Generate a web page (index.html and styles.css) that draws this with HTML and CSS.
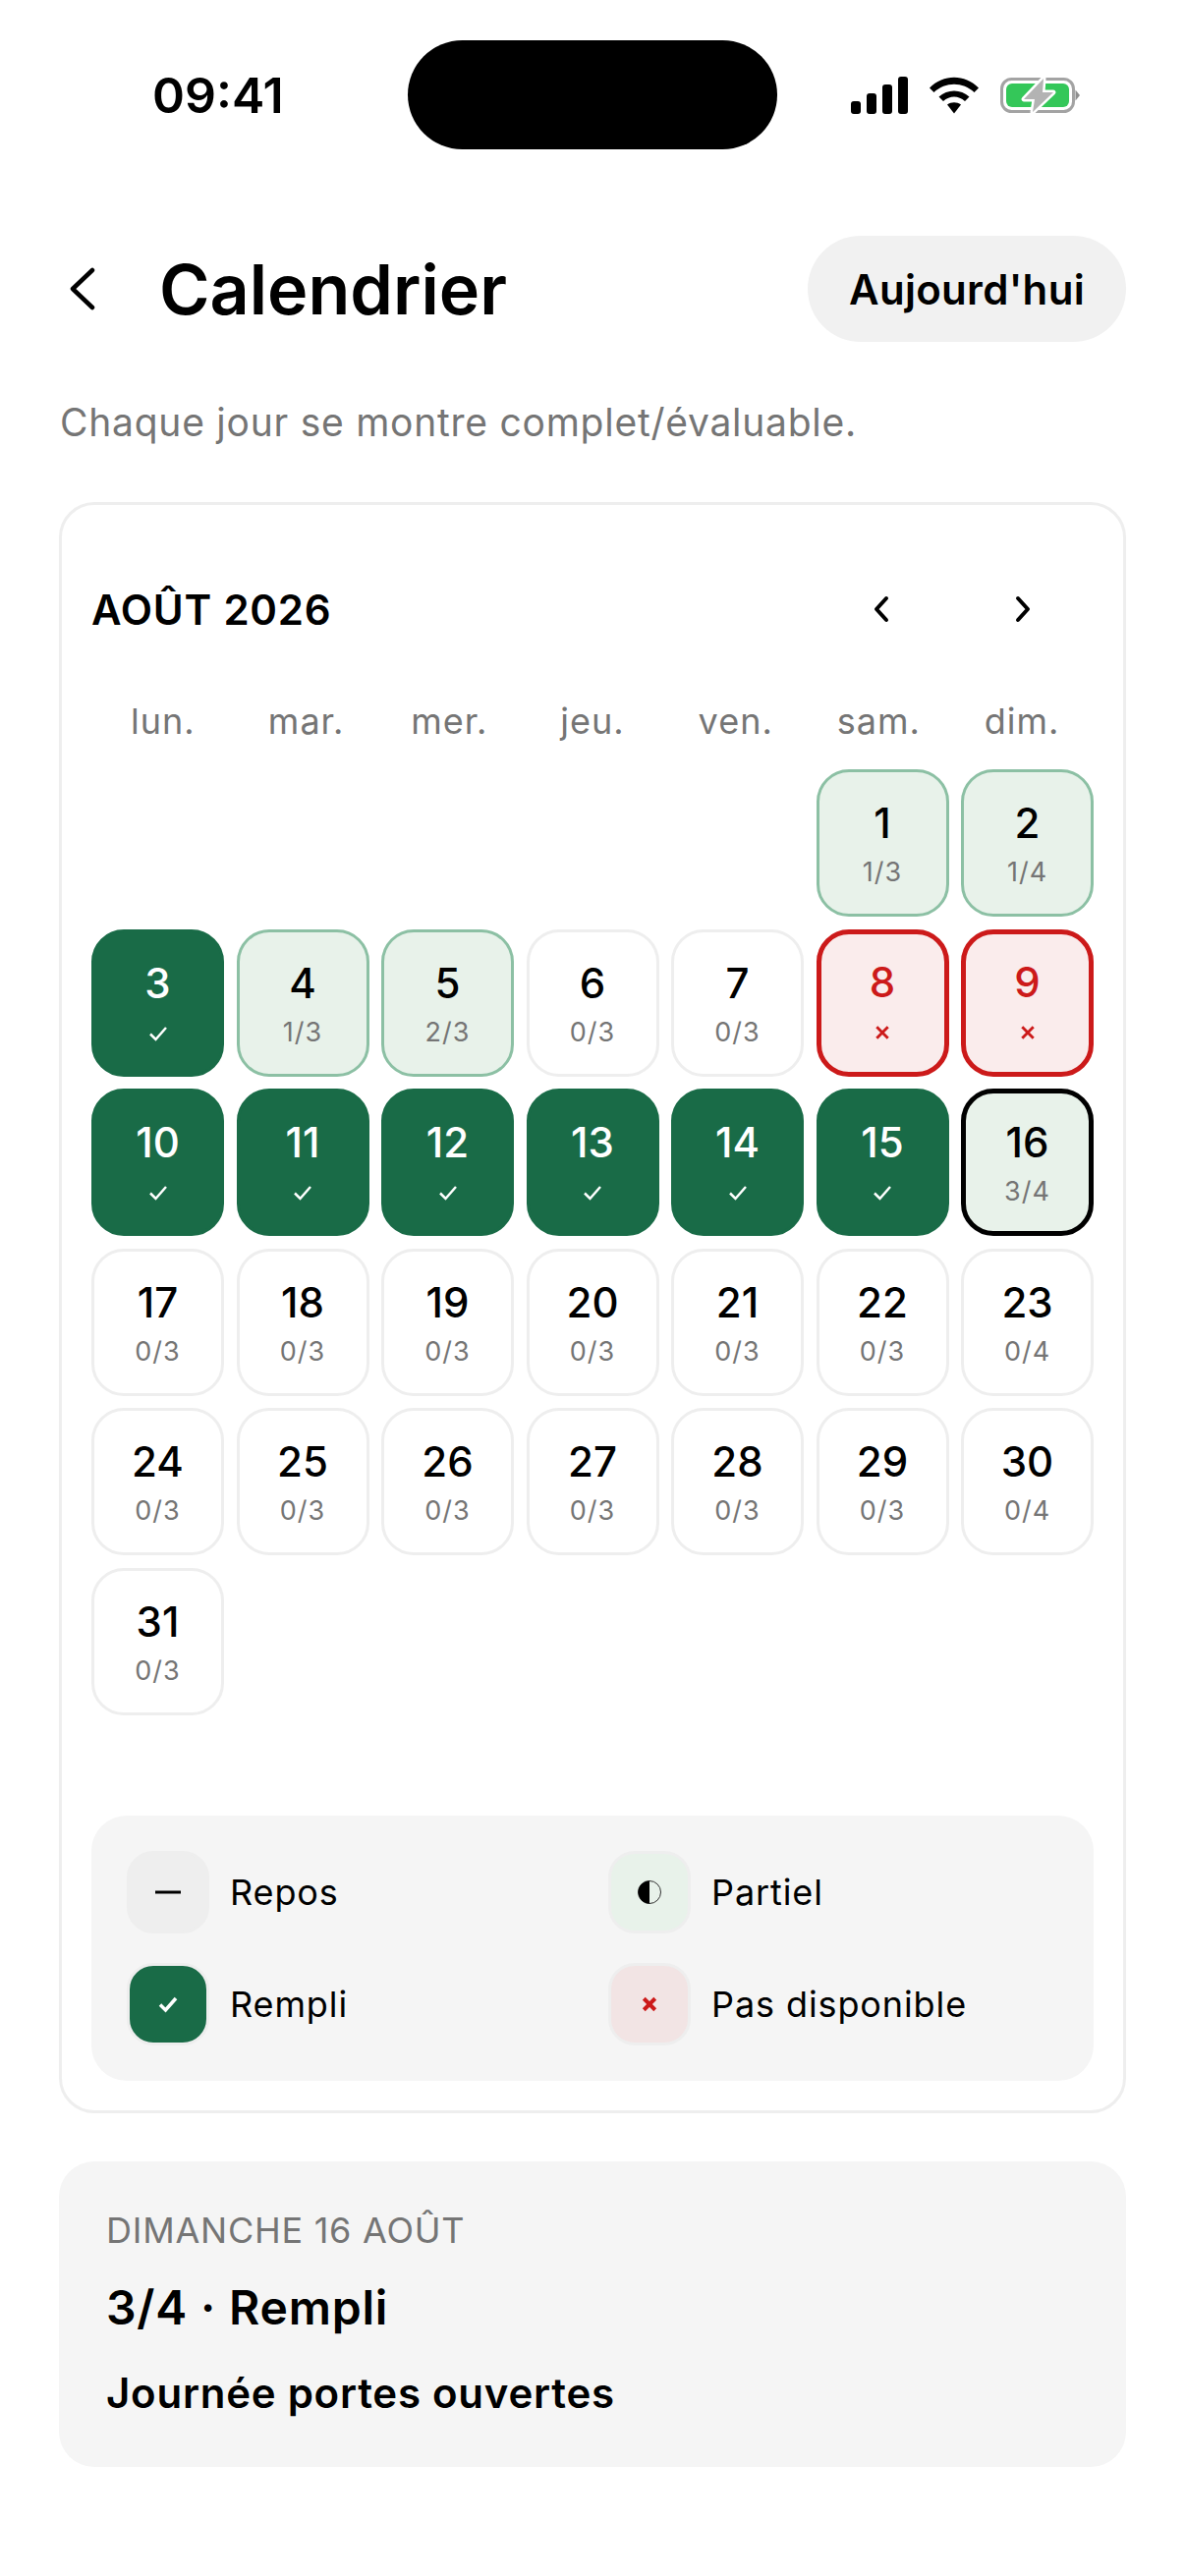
FILE: index.html
```html
<!DOCTYPE html>
<html lang="fr">
<head>
    <meta charset="UTF-8">
    <meta name="viewport" content="width=device-width, initial-scale=1.0">
    <title>Calendrier</title>
    <link rel="stylesheet" href="styles.css">
</head>
<body>
    <!-- Barre d'état -->
    <div class="statusbar">
        <span class="time">09:41</span>
        <div class="island"></div>
        <div class="status-icons">
            <svg width="58" height="38" viewBox="0 0 58 38"><rect x="0" y="25" width="10" height="13" rx="3"/><rect x="16" y="17" width="10" height="21" rx="3"/><rect x="32" y="8" width="10" height="30" rx="3"/><rect x="48" y="0" width="10" height="38" rx="3"/></svg>
            <svg width="50" height="38" viewBox="0 0 50 38"><path d="M0 11.500C14 -3 36 -3 50 11.500L45.500 16C34 5 16 5 4.500 16Z"/><path d="M9.500 20.500C18 12.500 32 12.500 40.500 20.500L36 25C29.500 19 20.500 19 14 25Z"/><path d="M18 28.500C22 25.500 28 25.500 32 28.500L25 37.500Z"/></svg>
            <svg width="82" height="40" viewBox="0 0 82 40">
                <rect x="1.500" y="3.500" width="73" height="33" rx="10" fill="none" stroke="#a3a3a3" stroke-width="3"/>
                <rect x="6" y="8" width="64" height="24" rx="6" fill="#34c759"/>
                <path d="M76.500 14.500L81 20L76.500 25.500Z" fill="#8e8e8e"/>
                <path d="M44 3L24 24H35L33 37L54 17H43Z" fill="#b3b3b3" stroke="#fff" stroke-width="5" paint-order="stroke" stroke-linejoin="round"/>
            </svg>
        </div>
    </div>

    <!-- En-tête -->
    <header class="header">
        <button class="back" aria-label="Retour">
            <svg width="30" height="48" viewBox="0 0 30 48"><path d="M27 5L7 24L27 43" fill="none" stroke="#000" stroke-width="4.500" stroke-linecap="round" stroke-linejoin="round"/></svg>
        </button>
        <h1>Calendrier</h1>
        <button class="today">Aujourd'hui</button>
    </header>
    <p class="subtitle">Chaque jour se montre complet/évaluable.</p>

    <!-- Calendrier -->
    <section class="card">
        <div class="month-row">
            <h2>AOÛT 2026</h2>
            <div class="month-nav">
                <button aria-label="Mois précédent"><svg width="18" height="28" viewBox="0 0 18 28"><path d="M14 3L4 14L14 25" fill="none" stroke="#000" stroke-width="4" stroke-linecap="round" stroke-linejoin="round"/></svg></button>
                <button aria-label="Mois suivant"><svg width="18" height="28" viewBox="0 0 18 28"><path d="M4 3L14 14L4 25" fill="none" stroke="#000" stroke-width="4" stroke-linecap="round" stroke-linejoin="round"/></svg></button>
            </div>
        </div>

        <div class="weekdays">
            <span>lun.</span><span>mar.</span><span>mer.</span><span>jeu.</span><span>ven.</span><span>sam.</span><span>dim.</span>
        </div>

        <div class="days">
            <div class="day blank"></div><div class="day blank"></div><div class="day blank"></div><div class="day blank"></div><div class="day blank"></div>
            <div class="day partial"><b>1</b><small>1/3</small></div>
            <div class="day partial"><b>2</b><small>1/4</small></div>

            <div class="day full"><b>3</b><svg class="mark" viewBox="0 0 20 16"><path d="M2 8.500L7.500 14L18 2"/></svg></div>
            <div class="day partial"><b>4</b><small>1/3</small></div>
            <div class="day partial"><b>5</b><small>2/3</small></div>
            <div class="day"><b>6</b><small>0/3</small></div>
            <div class="day"><b>7</b><small>0/3</small></div>
            <div class="day off"><b>8</b><svg class="mark cross" viewBox="0 0 14 14"><path d="M2 2L12 12M12 2L2 12"/></svg></div>
            <div class="day off"><b>9</b><svg class="mark cross" viewBox="0 0 14 14"><path d="M2 2L12 12M12 2L2 12"/></svg></div>

            <div class="day full"><b>10</b><svg class="mark" viewBox="0 0 20 16"><path d="M2 8.500L7.500 14L18 2"/></svg></div>
            <div class="day full"><b>11</b><svg class="mark" viewBox="0 0 20 16"><path d="M2 8.500L7.500 14L18 2"/></svg></div>
            <div class="day full"><b>12</b><svg class="mark" viewBox="0 0 20 16"><path d="M2 8.500L7.500 14L18 2"/></svg></div>
            <div class="day full"><b>13</b><svg class="mark" viewBox="0 0 20 16"><path d="M2 8.500L7.500 14L18 2"/></svg></div>
            <div class="day full"><b>14</b><svg class="mark" viewBox="0 0 20 16"><path d="M2 8.500L7.500 14L18 2"/></svg></div>
            <div class="day full"><b>15</b><svg class="mark" viewBox="0 0 20 16"><path d="M2 8.500L7.500 14L18 2"/></svg></div>
            <div class="day partial selected"><b>16</b><small>3/4</small></div>

            <div class="day"><b>17</b><small>0/3</small></div>
            <div class="day"><b>18</b><small>0/3</small></div>
            <div class="day"><b>19</b><small>0/3</small></div>
            <div class="day"><b>20</b><small>0/3</small></div>
            <div class="day"><b>21</b><small>0/3</small></div>
            <div class="day"><b>22</b><small>0/3</small></div>
            <div class="day"><b>23</b><small>0/4</small></div>

            <div class="day"><b>24</b><small>0/3</small></div>
            <div class="day"><b>25</b><small>0/3</small></div>
            <div class="day"><b>26</b><small>0/3</small></div>
            <div class="day"><b>27</b><small>0/3</small></div>
            <div class="day"><b>28</b><small>0/3</small></div>
            <div class="day"><b>29</b><small>0/3</small></div>
            <div class="day"><b>30</b><small>0/4</small></div>

            <div class="day"><b>31</b><small>0/3</small></div>
        </div>

        <!-- Légende -->
        <div class="legend">
            <div class="legend-item">
                <span class="swatch swatch-rest"><svg width="26" height="4" viewBox="0 0 26 4"><rect width="26" height="3" y="0.500" fill="#000"/></svg></span>
                Repos
            </div>
            <div class="legend-item">
                <span class="swatch swatch-partial"><svg width="24" height="26" viewBox="0 0 24 26"><circle cx="12" cy="13" r="11.500" fill="none" stroke="#333" stroke-width="1"/><path d="M12 1.500A11.500 11.500 0 0 0 12 24.500Z" fill="#000"/></svg></span>
                Partiel
            </div>
            <div class="legend-item">
                <span class="swatch swatch-full"><svg width="20" height="18" viewBox="0 0 20 18"><path d="M2 9.500L7.500 15L18 3" fill="none" stroke="#fff" stroke-width="3.500"/></svg></span>
                Rempli
            </div>
            <div class="legend-item">
                <span class="swatch swatch-off"><svg width="16" height="16" viewBox="0 0 14 14"><path d="M2 2L12 12M12 2L2 12" fill="none" stroke="#cc1a1a" stroke-width="3.500"/></svg></span>
                Pas disponible
            </div>
        </div>
    </section>

    <!-- Détail du jour -->
    <section class="detail">
        <p class="detail-date">DIMANCHE 16 AOÛT</p>
        <p class="detail-status">3/4 · Rempli</p>
        <p class="detail-event">Journée portes ouvertes</p>
    </section>
</body>
</html>
```

FILE: styles.css
```css
body {
    font-family: Inter, "Noto Sans", sans-serif;
    margin: 0;
    padding: 0;
    width: 1206px;
    height: 2622px;
    overflow: hidden;
    background: #fff;
    color: #000;
}

h1, h2, p {
    margin: 0;
}

button {
    font-family: inherit;
    border: none;
    background: none;
    padding: 0;
    color: inherit;
}

/* Barre d'état */
.statusbar {
    display: flex;
    align-items: center;
    height: 111px;
    padding: 41px 106px 0 155px;
}

.time {
    font-size: 50px;
    font-weight: 600;
    width: 260px;
}

.island {
    width: 376px;
    height: 111px;
    border-radius: 56px;
    background: #000;
}

.status-icons {
    display: flex;
    align-items: center;
    gap: 22px;
    margin-left: auto;
}

/* En-tête */
.header {
    display: flex;
    align-items: center;
    height: 108px;
    margin-top: 88px;
    padding: 0 60px;
}

.back {
    display: flex;
    width: 102px;
    padding-left: 7px;
}

.header h1 {
    font-size: 70px;
    font-weight: 600;
}

.today {
    margin-left: auto;
    width: 324px;
    height: 108px;
    border-radius: 54px;
    background: #f1f1f1;
    font-size: 42px;
    font-weight: 600;
    letter-spacing: 0.300px;
}

.subtitle {
    margin-top: 52px;
    padding: 0 61px;
    font-size: 39px;
    line-height: 60px;
    letter-spacing: 0.750px;
    color: #757575;
}

/* Calendrier */
.card {
    box-sizing: border-box;
    width: 1086px;
    height: 1640px;
    margin: 51px 60px 0;
    padding: 30px;
    border: 3px solid #eeeeee;
    border-radius: 36px;
}

.month-row {
    display: flex;
    align-items: center;
    justify-content: space-between;
    height: 66px;
    margin-top: 43px;
}

.month-row h2 {
    font-size: 42px;
    font-weight: 600;
    letter-spacing: 0.800px;
}

.month-nav {
    display: flex;
    gap: 72px;
    padding-right: 36px;
}

.month-nav button {
    display: flex;
    align-items: center;
    justify-content: center;
    width: 72px;
    height: 66px;
}

.weekdays {
    display: grid;
    grid-template-columns: repeat(7, 1fr);
    margin-top: 57px;
    font-size: 36px;
    line-height: 48px;
    letter-spacing: 1px;
    text-align: center;
    color: #757575;
}

.days {
    display: grid;
    grid-template-columns: repeat(7, 135px);
    grid-auto-rows: 150px;
    gap: 12.600px 12.500px;
    margin-top: 25px;
}

.day {
    box-sizing: border-box;
    display: flex;
    flex-direction: column;
    align-items: center;
    border: 3px solid #eeeeee;
    border-radius: 33px;
    padding-top: 28px;
}

.day b {
    font-size: 42px;
    line-height: 48px;
    font-weight: 500;
}

.day small {
    margin-top: 8px;
    font-size: 27px;
    line-height: 36px;
    letter-spacing: 1px;
    color: #757575;
}

.day .mark {
    width: 20px;
    height: 16px;
    margin-top: 19px;
    fill: none;
    stroke: #fff;
    stroke-width: 2.500;
}

.day .mark.cross {
    width: 16px;
    height: 16px;
    stroke: #cc1a1a;
}

.blank {
    border: none;
}

.partial {
    background: #e8f2ea;
    border-color: #8cc0a4;
}

.full {
    background: #196b47;
    border-color: #196b47;
    color: #fff;
}

.off {
    background: #faecec;
    border: 5.500px solid #cc1a1a;
    color: #cc1a1a;
    padding-top: 25.500px;
}

.selected {
    border: 5.500px solid #000;
    padding-top: 25.500px;
}

/* Légende */
.legend {
    display: grid;
    grid-template-columns: 1fr 1fr;
    gap: 30px 32px;
    margin-top: 102px;
    padding: 36px;
    border-radius: 36px;
    background: #f5f5f5;
}

.legend-item {
    display: flex;
    align-items: center;
    gap: 21px;
    font-size: 36px;
    letter-spacing: 0.900px;
}

.swatch {
    box-sizing: border-box;
    display: flex;
    align-items: center;
    justify-content: center;
    width: 84px;
    height: 84px;
    border: 3px solid #eeeeee;
    border-radius: 27px;
}

.swatch-rest {
    background: #eeeeee;
}

.swatch-partial {
    background: #e8f2ea;
}

.swatch-full {
    background: #196b47;
}

.swatch-off {
    background: #f2e4e4;
}

/* Détail du jour */
.detail {
    box-sizing: border-box;
    width: 1086px;
    height: 311px;
    margin: 49px 60px 0;
    padding: 46px 48px;
    border-radius: 36px;
    background: #f5f5f5;
}

.detail-date {
    font-size: 36px;
    line-height: 48px;
    letter-spacing: 0.750px;
    color: #757575;
}

.detail-status {
    margin-top: 25px;
    font-size: 48px;
    line-height: 60px;
    font-weight: 600;
    letter-spacing: 0.800px;
}

.detail-event {
    margin-top: 30px;
    font-size: 42px;
    line-height: 54px;
    font-weight: 600;
    letter-spacing: 0.750px;
}
```
